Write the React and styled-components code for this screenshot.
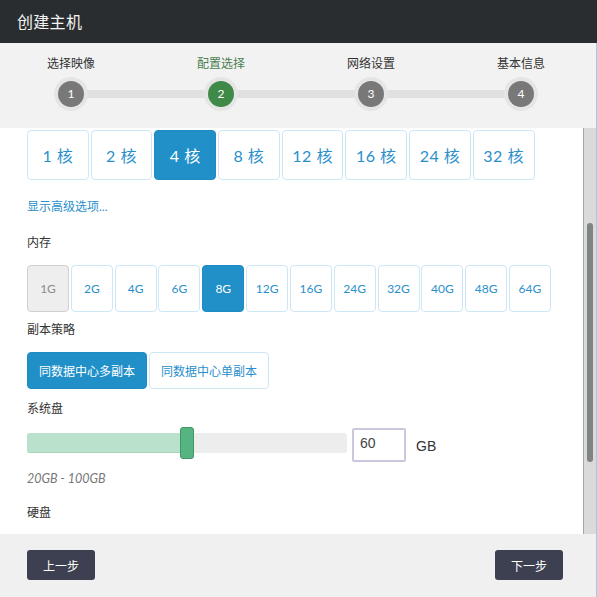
import React, { useLayoutEffect, useRef, useState } from 'react'
import styled, { createGlobalStyle } from 'styled-components';

const FONT = `Lato, "Noto Sans CJK SC", "Noto Sans", sans-serif`;

const GlobalStyle = createGlobalStyle`
  html, body {
    margin: 0;
    padding: 0;
    overflow: hidden;
    background: #fff;
    font-family: ${FONT};
  }
  * { box-sizing: border-box; }
`;

const steps = ['选择映像', '配置选择', '网络设置', '基本信息'];
const zones = ['可用区 A', '可用区 B', '可用区 C'];
const cpus = [1, 2, 4, 8, 12, 16, 24, 32];
const mems = ['1G', '2G', '4G', '6G', '8G', '12G', '16G', '24G', '32G', '40G', '48G', '64G'];

function App() {
  const scrollRef = useRef(null);
  const cpuRef = useRef(null);
  const [thumb, setThumb] = useState({ top: 0, height: 0 });
  const diskValue = 60;
  const pct = ((diskValue - 20) / (100 - 20)) * 100;

  useLayoutEffect(() => {
    const box = scrollRef.current;
    const row = cpuRef.current;
    if (!box || !row) return;
    // the form is shown scrolled so the CPU row sits at the top
    const off = row.getBoundingClientRect().top - box.getBoundingClientRect().top;
    box.scrollTop = off - 2;
    const ratio = box.clientHeight / box.scrollHeight;
    setThumb({
      top: box.scrollTop * ratio,
      height: box.clientHeight * ratio,
    });
  }, []);

  return (
    <Page>
      <GlobalStyle />
      <Header>创建主机</Header>
      <Body>
        <Steps>
          <StepLine />
          {steps.map((s, i) => (
            <Step key={s}>
              <StepLabel $active={i === 1}>{s}</StepLabel>
              <StepDot $active={i === 1}>{i + 1}</StepDot>
            </Step>
          ))}
        </Steps>

        <Main>
          <Content ref={scrollRef}>
            <Label $mt={26}>可用区</Label>
            <Row $mt={13}>
              {zones.map((z, i) => (
                <WideButton key={z} $active={i === 0}>{z}</WideButton>
              ))}
            </Row>
            <Hint $mt={10}>不同可用区之间内网互通</Hint>
            <Label $mt={10}>CPU</Label>
            <Row $mt={13} ref={cpuRef}>
              {cpus.map((c) => (
                <CpuButton key={c} $active={c === 4}>{c} 核</CpuButton>
              ))}
            </Row>

            <Link $mt={18}>显示高级选项...</Link>

            <Label $mt={18}>内存</Label>
            <Row $mt={13}>
              {mems.map((m) => (
                <MemButton key={m} $active={m === '8G'} $disabled={m === '1G'}>{m}</MemButton>
              ))}
            </Row>

            <Label $mt={9}>副本策略</Label>
            <Row $mt={13}>
              <WideButton $active>同数据中心多副本</WideButton>
              <WideButton>同数据中心单副本</WideButton>
            </Row>

            <Label $mt={11}>系统盘</Label>
            <SliderRow $mt={9}>
              <Track>
                <Fill style={{ width: `${pct}%` }} />
                <Handle style={{ left: `calc(${pct}% - 7px)` }} />
              </Track>
              <SizeInput defaultValue={diskValue} />
              <Unit>GB</Unit>
            </SliderRow>
            <Range $mt={8}>20GB - 100GB</Range>

            <Label $mt={16}>硬盘</Label>
            <SliderRow $mt={13}>
              <Track>
                <Fill style={{ width: '0%' }} />
                <Handle style={{ left: '-7px' }} />
              </Track>
              <SizeInput defaultValue={0} />
              <Unit>GB</Unit>
            </SliderRow>
            <Row $mt={10}>
              <WideButton>添加硬盘</WideButton>
            </Row>
            <Spacer />
          </Content>
          <ScrollTrack>
            <ScrollThumb style={{ marginTop: thumb.top, height: thumb.height }} />
          </ScrollTrack>
        </Main>

        <Footer>
          <NavButton>上一步</NavButton>
          <NavButton>下一步</NavButton>
        </Footer>
      </Body>
    </Page>
  );
}
export default App;

const Page = styled.div`
  width: 597px;
  height: 597px;
  display: flex;
  flex-direction: column;
  font-family: ${FONT};
`;
const Header = styled.div`
  height: 43px;
  flex: none;
  background: #2a2d2f;
  color: #f4f4f4;
  font-size: 16px;
  line-height: 43px;
  padding-left: 17px;
  letter-spacing: 0.3px;
`;
const Body = styled.div`
  flex: 1;
  display: flex;
  flex-direction: column;
  border-right: 1px solid #8fd2f2;
  min-height: 0;
`;
const Steps = styled.div`
  position: relative;
  height: 85px;
  flex: none;
  background: #f2f2f2;
  display: flex;
  justify-content: space-between;
  padding: 12px 45px 0 41px;
`;
const StepLine = styled.div`
  position: absolute;
  left: 71px;
  right: 75px;
  top: 47px;
  height: 8px;
  background: #e0e0e0;
`;
const Step = styled.div`
  position: relative;
  width: 60px;
  display: flex;
  flex-direction: column;
  align-items: center;
`;
const StepLabel = styled.div`
  font-size: 12px;
  line-height: 18px;
  color: ${(p) => (p.$active ? '#4a7f50' : '#333')};
  white-space: nowrap;
`;
const StepDot = styled.div`
  margin-top: 8px;
  width: 26px;
  height: 26px;
  border-radius: 50%;
  background: ${(p) => (p.$active ? '#3f8a48' : '#787878')};
  box-shadow: 0 0 0 4px #e5e5e5;
  color: #fff;
  font-size: 12px;
  line-height: 26px;
  text-align: center;
`;
const Main = styled.div`
  height: 406px;
  flex: none;
  display: flex;
  background: #fff;
`;
const Content = styled.div`
  flex: 1;
  min-width: 0;
  overflow-y: scroll;
  padding-left: 27px;
  scrollbar-width: none;
  &::-webkit-scrollbar {
    display: none;
  }
`;
const ScrollTrack = styled.div`
  width: 13px;
  flex: none;
  background: #dadada;
  border-left: 1px solid #a6a6a6;
  padding-left: 3px;
`;
const ScrollThumb = styled.div`
  width: 6px;
  background: #7f8383;
  border-radius: 3px;
`;
const Label = styled.div`
  margin-top: ${(p) => p.$mt || 0}px;
  font-size: 12px;
  line-height: 18px;
  color: #333;
`;
const Hint = styled(Label)`
  color: #888;
`;
const Link = styled(Label)`
  color: #2a8fcb;
  cursor: pointer;
`;
const Range = styled(Label)`
  color: #777;
  font-style: italic;
  font-size: 12.5px;
`;
const Row = styled.div`
  margin-top: ${(p) => p.$mt || 0}px;
  display: flex;
  gap: 2px;
`;
const OptionButton = styled.button`
  font-family: ${FONT};
  border: 1px solid ${(p) => (p.$active ? '#1f8bc4' : p.$disabled ? '#d0d0d0' : '#cde7f6')};
  background: ${(p) => (p.$active ? '#2190c9' : p.$disabled ? '#eeeeee' : '#fff')};
  color: ${(p) => (p.$active ? '#fff' : p.$disabled ? '#8a8a8a' : '#2a8fcb')};
  border-radius: 4px;
  padding: 0;
  cursor: pointer;
  flex: none;
`;
const CpuButton = styled(OptionButton)`
  width: 61.7px;
  height: 50px;
  font-size: 16px;
  letter-spacing: 0.5px;
`;
const MemButton = styled(OptionButton)`
  width: 42px;
  height: 47px;
  font-size: 12px;
  margin-right: -0.2px;
`;
const WideButton = styled(OptionButton)`
  width: 120px;
  height: 37px;
  font-size: 12px;
`;
const SliderRow = styled.div`
  margin-top: ${(p) => p.$mt || 0}px;
  display: flex;
  align-items: center;
  height: 35px;
`;
const Track = styled.div`
  position: relative;
  width: 320px;
  height: 20px;
  border-radius: 3px;
  background: #ededed;
  margin-top: -3px;
`;
const Fill = styled.div`
  height: 100%;
  background: #b9e1cb;
  border-bottom: 1px solid #a6d3ba;
  border-radius: 3px 0 0 3px;
`;
const Handle = styled.div`
  position: absolute;
  top: -6px;
  width: 14px;
  height: 32px;
  background: #56b482;
  border: 1px solid #3f9866;
  border-radius: 3px;
`;
const SizeInput = styled.input`
  margin-left: 5px;
  width: 54px;
  height: 34px;
  border: 2px solid #ccc7dc;
  border-radius: 2px;
  padding: 0 0 4px 6px;
  font-family: "Liberation Sans", Arial, sans-serif;
  font-size: 14px;
  color: #444;
  outline: none;
`;
const Unit = styled.span`
  margin-left: 10px;
  font-family: "Liberation Sans", Arial, sans-serif;
  font-size: 14px;
  color: #333;
  margin-top: 3px;
`;
const Spacer = styled.div`
  height: 40px;
`;
const Footer = styled.div`
  height: 63px;
  flex: none;
  background: #f0f0f0;
  display: flex;
  justify-content: space-between;
  align-items: flex-start;
  padding: 16px 33px 0 27px;
`;
const NavButton = styled.button`
  width: 68px;
  height: 30px;
  border: none;
  border-radius: 3px;
  background: #3d4051;
  color: #fff;
  font-family: ${FONT};
  font-size: 12px;
  padding: 0;
  cursor: pointer;
`;
